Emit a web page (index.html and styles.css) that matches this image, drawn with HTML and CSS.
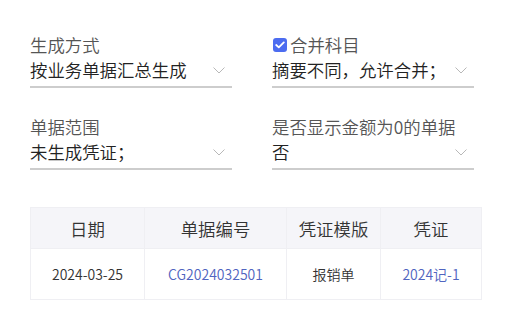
FILE: index.html
```html
<!DOCTYPE html>
<html lang="zh">
<head>
<meta charset="utf-8">
<link rel="stylesheet" href="styles.css">
</head>
<body>
<div class="page">
  <div class="form">
    <div class="field">
      <div class="label">生成方式</div>
      <div class="select"><span class="value">按业务单据汇总生成</span><svg class="chev" width="12" height="7" viewBox="0 0 12 7"><path d="M0.5 0.5 L6 6 L11.5 0.5" fill="none" stroke="#b8b8b8" stroke-width="1"/></svg></div>
    </div>
    <div class="field">
      <div class="label"><span class="check"><svg width="10" height="8" viewBox="0 0 10 8"><path d="M1.2 4 L3.8 6.4 L8.8 1.4" fill="none" stroke="#fff" stroke-width="1.8" stroke-linecap="round" stroke-linejoin="round"/></svg></span>合并科目</div>
      <div class="select"><span class="value">摘要不同，允许合并；</span><svg class="chev" width="12" height="7" viewBox="0 0 12 7"><path d="M0.5 0.5 L6 6 L11.5 0.5" fill="none" stroke="#b8b8b8" stroke-width="1"/></svg></div>
    </div>
    <div class="field">
      <div class="label">单据范围</div>
      <div class="select"><span class="value">未生成凭证；</span><svg class="chev" width="12" height="7" viewBox="0 0 12 7"><path d="M0.5 0.5 L6 6 L11.5 0.5" fill="none" stroke="#b8b8b8" stroke-width="1"/></svg></div>
    </div>
    <div class="field">
      <div class="label">是否显示金额为0的单据</div>
      <div class="select"><span class="value">否</span><svg class="chev" width="12" height="7" viewBox="0 0 12 7"><path d="M0.5 0.5 L6 6 L11.5 0.5" fill="none" stroke="#b8b8b8" stroke-width="1"/></svg></div>
    </div>
  </div>
  <table class="grid">
    <colgroup><col class="c1"><col class="c2"><col class="c3"><col class="c4"></colgroup>
    <thead>
      <tr><th>日期</th><th>单据编号</th><th>凭证模版</th><th>凭证</th></tr>
    </thead>
    <tbody>
      <tr><td>2024-03-25</td><td class="link">CG2024032501</td><td>报销单</td><td class="link">2024记-1</td></tr>
    </tbody>
  </table>
</div>
</body>
</html>
```
FILE: styles.css
```css
* { box-sizing: border-box; }
html, body { margin: 0; padding: 0; background: #fff; }
body { font-family: "Noto Sans CJK SC", "Noto Sans", sans-serif; font-weight: 350; color: #222; }
.page { padding: 34px 0 0 30px; width: 508px; }
.form {
  display: grid;
  grid-template-columns: 202px 202px;
  column-gap: 40px;
  row-gap: 28px;
}
.field { display: flex; flex-direction: column; }
.label {
  font-size: 17.4px;
  line-height: 22px;
  height: 22px;
  color: #555;
  display: flex;
  align-items: center;
}
.check {
  width: 14px; height: 14px;
  background: #4c6cf0;
  border-radius: 3px;
  display: inline-flex;
  align-items: center;
  justify-content: center;
  margin: 0 3px 0 1px;
}
.select {
  margin-top: 2px;
  display: flex;
  align-items: center;
  justify-content: space-between;
  height: 30px;
  padding: 0 7px 4px 0;
  border-bottom: 2px solid #cdcdcd;
}
.value { font-size: 17.4px; line-height: 26px; color: #222; }
.chev { flex: none; }
.grid {
  margin-top: 37px;
  border-collapse: collapse;
  table-layout: fixed;
  width: 451px;
}
.c1 { width: 114px; }
.c2 { width: 142px; }
.c3 { width: 94px; }
.c4 { width: 101px; }
.grid th, .grid td { border: 1px solid #efeff3; text-align: center; padding: 0; }
.grid th {
  background: #f5f5f9;
  height: 41px;
  font-size: 17.4px;
  font-weight: 350;
  color: #333;
}
.grid td { height: 51px; font-size: 14px; color: #333; }
.grid td.link { color: #5064c0; }
```
